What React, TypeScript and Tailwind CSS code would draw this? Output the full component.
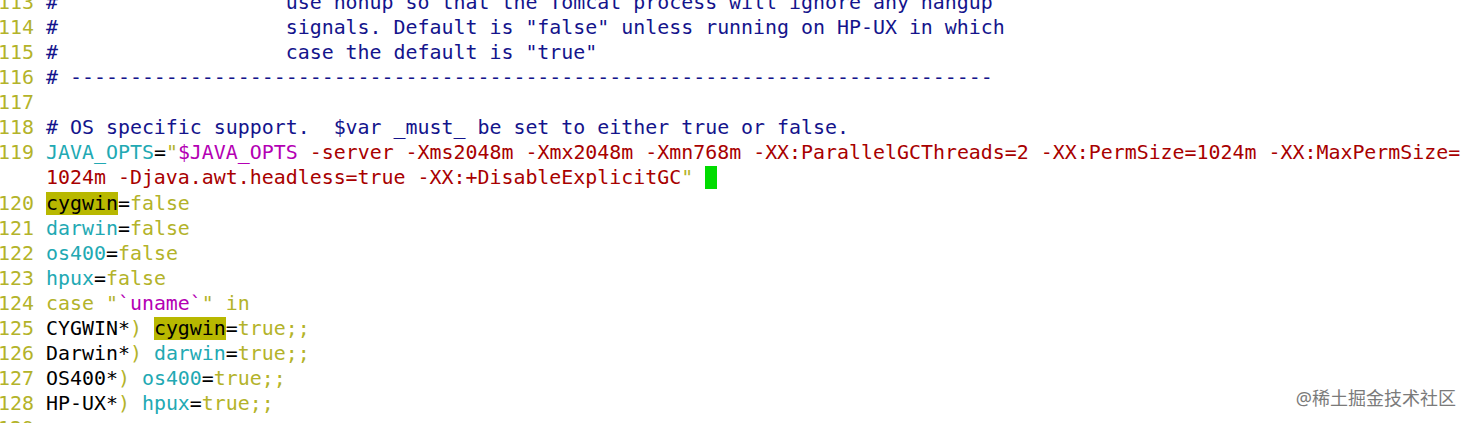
import React from "react";

type Seg = [string, string];

const C = {
  num: "text-[#b3b32a]",
  blue: "text-[#14148c]",
  red: "text-[#a80000]",
  cyan: "text-[#22a9b3]",
  mag: "text-[#b400b4]",
  yel: "text-[#b3b32a]",
  blk: "text-[#000000]",
  hl: "text-[#000000] bg-[#b8b800]",
};

const dashes = "-".repeat(77);

const lines: { n: string; segs: Seg[] }[] = [
  { n: "113", segs: [["#                   use nohup so that the Tomcat process will ignore any hangup", C.blue]] },
  { n: "114", segs: [["#                   signals. Default is \"false\" unless running on HP-UX in which", C.blue]] },
  { n: "115", segs: [["#                   case the default is \"true\"", C.blue]] },
  { n: "116", segs: [["# " + dashes, C.blue]] },
  { n: "117", segs: [] },
  { n: "118", segs: [["# OS specific support.  $var _must_ be set to either true or false.", C.blue]] },
  {
    n: "119",
    segs: [
      ["JAVA_OPTS", C.cyan],
      ["=", C.blk],
      ["\"", C.yel],
      ["$JAVA_OPTS", C.mag],
      [" -server -Xms2048m -Xmx2048m -Xmn768m -XX:ParallelGCThreads=2 -XX:PermSize=1024m -XX:MaxPermSize=", C.red],
    ],
  },
  {
    n: "",
    segs: [
      ["1024m -Djava.awt.headless=true -XX:+DisableExplicitGC", C.red],
      ["\"", C.yel],
      [" ", C.blk],
      [" ", "bg-[#00dc00]"],
    ],
  },
  { n: "120", segs: [["cygwin", C.hl], ["=", C.blk], ["false", C.yel]] },
  { n: "121", segs: [["darwin", C.cyan], ["=", C.blk], ["false", C.yel]] },
  { n: "122", segs: [["os400", C.cyan], ["=", C.blk], ["false", C.yel]] },
  { n: "123", segs: [["hpux", C.cyan], ["=", C.blk], ["false", C.yel]] },
  { n: "124", segs: [["case \"", C.yel], ["`uname`", C.mag], ["\" in", C.yel]] },
  { n: "125", segs: [["CYGWIN*", C.blk], [") ", C.yel], ["cygwin", C.hl], ["=", C.blk], ["true;;", C.yel]] },
  { n: "126", segs: [["Darwin*", C.blk], [") ", C.yel], ["darwin", C.cyan], ["=", C.blk], ["true;;", C.yel]] },
  { n: "127", segs: [["OS400*", C.blk], [") ", C.yel], ["os400", C.cyan], ["=", C.blk], ["true;;", C.yel]] },
  { n: "128", segs: [["HP-UX*", C.blk], [") ", C.yel], ["hpux", C.cyan], ["=", C.blk], ["true;;", C.yel]] },
  { n: "129", segs: [] },
];

export default function App() {
  return (
    <div className="relative w-[1470px] h-[423px] overflow-hidden bg-white">
      <div
        className="-mt-[10px] -ml-[2px] flex flex-col text-[19.92px] leading-[25.07px] whitespace-pre"
        style={{ fontFamily: '"DejaVu Sans Mono", monospace' }}
      >
        {lines.map((l, i) => (
          <div key={i} className="flex h-[25.07px]">
            <span className={`${C.num} w-[48px] shrink-0`}>{l.n ? l.n.padStart(3, " ") + " " : "    "}</span>
            <span>
              {l.segs.map((s, j) => (
                <span key={j} className={s[1]}>
                  {s[0]}
                </span>
              ))}
            </span>
          </div>
        ))}
      </div>
      <div
        className="absolute right-[14px] top-[386px] text-[18px] leading-[24px] text-[#7a7a7a]"
        style={{ fontFamily: '"Noto Sans", "Noto Sans CJK SC", sans-serif' }}
      >
        @稀土掘金技术社区
      </div>
    </div>
  );
}
